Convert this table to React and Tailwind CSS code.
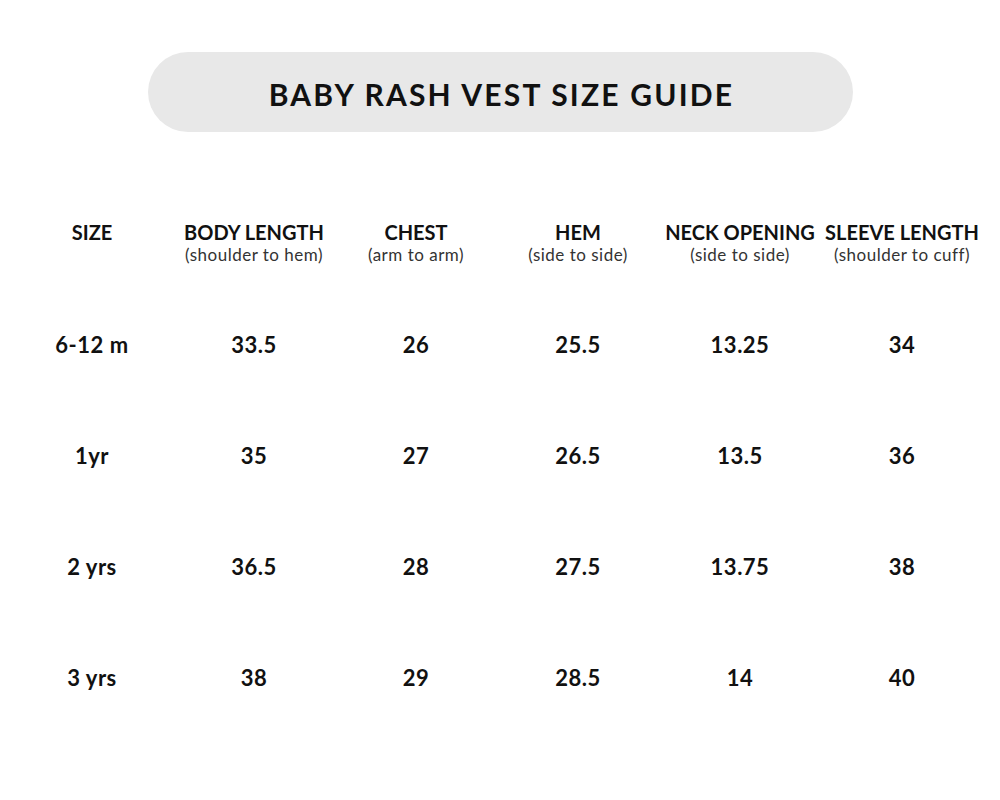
const HEADERS = [
  { title: "SIZE", sub: null },
  { title: "BODY LENGTH", sub: "(shoulder to hem)" },
  { title: "CHEST", sub: "(arm to arm)" },
  { title: "HEM", sub: "(side to side)" },
  { title: "NECK OPENING", sub: "(side to side)" },
  { title: "SLEEVE LENGTH", sub: "(shoulder to cuff)" },
];

const ROWS = [
  ["6-12 m", "33.5", "26", "25.5", "13.25", "34"],
  ["1yr", "35", "27", "26.5", "13.5", "36"],
  ["2 yrs", "36.5", "28", "27.5", "13.75", "38"],
  ["3 yrs", "38", "29", "28.5", "14", "40"],
];

export default function App() {
  return (
    <div className="w-[1000px] h-[800px] bg-white text-[#111] font-['Lato',sans-serif]">
      {/* Title pill */}
      <div className="pt-[52px] pl-[148px]">
        <div className="w-[705px] h-[80px] rounded-full bg-[#e8e8e8] flex items-center justify-center">
          <h1 className="text-[30px] font-bold tracking-[2.2px] leading-none pl-[2px] pt-[4px]">BABY RASH VEST SIZE GUIDE</h1>
        </div>
      </div>

      {/* Table */}
      <div className="pl-[11px] mt-[88px] w-[983px]">
        <div className="grid grid-cols-6 h-[72px]">
          {HEADERS.map((h) => (
            <div key={h.title} className="flex flex-col items-center text-center">
              <span className="text-[20px] font-bold leading-[24px] whitespace-nowrap">{h.title}</span>
              {h.sub && (
                <span className="text-[17px] tracking-[0.5px] leading-[22px] text-[#333] whitespace-nowrap">{h.sub}</span>
              )}
            </div>
          ))}
        </div>

        <div className="mt-[39px]">
          {ROWS.map((row) => (
            <div key={row[0]} className="grid grid-cols-6 h-[111px]">
              {row.map((cell, i) => (
                <div key={i} className="text-center text-[22px] font-bold tracking-[0.5px] leading-[28px]">
                  {cell}
                </div>
              ))}
            </div>
          ))}
        </div>
      </div>
    </div>
  );
}
